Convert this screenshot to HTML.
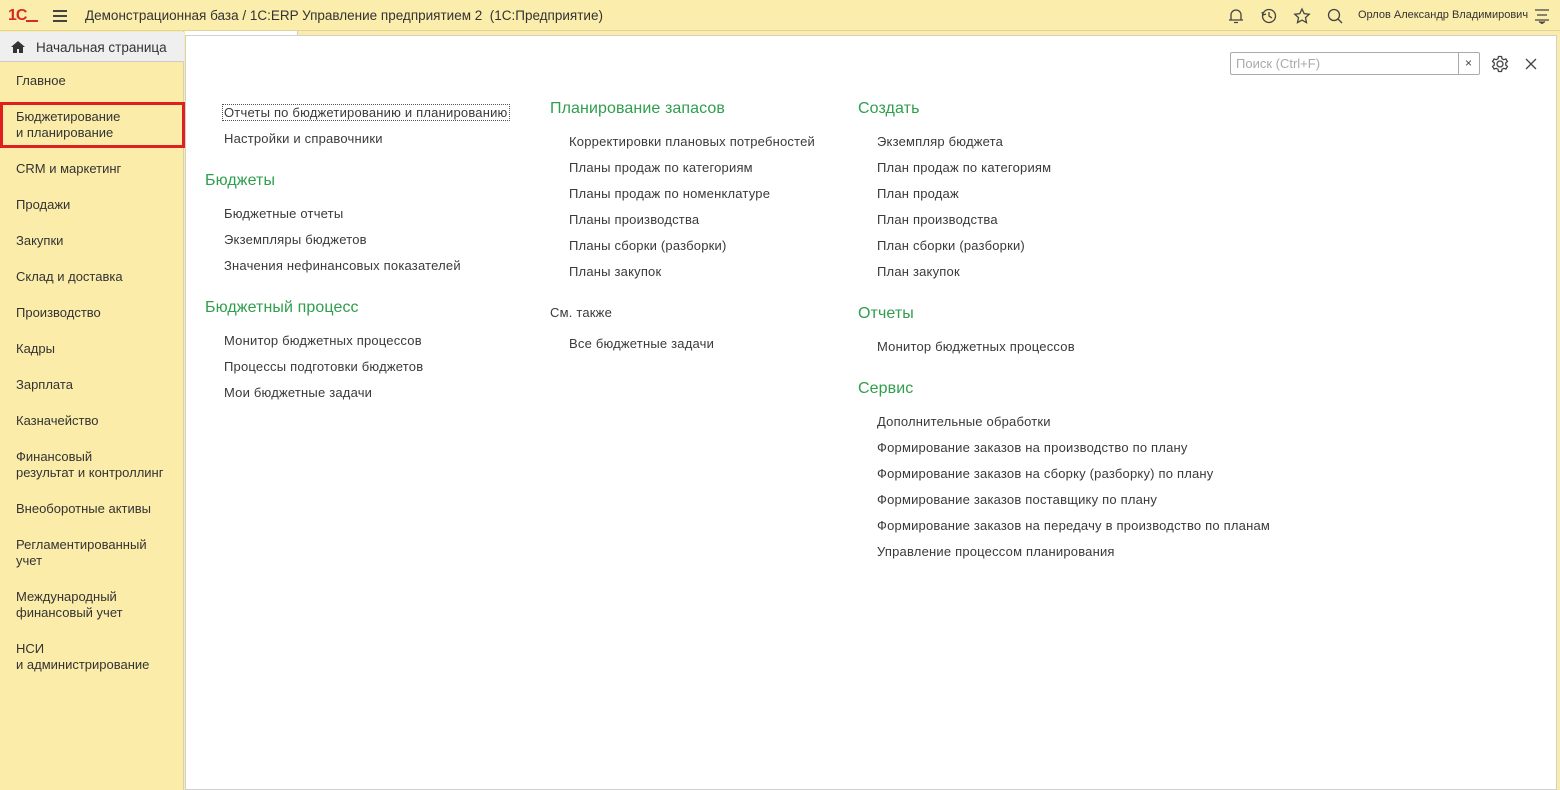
<!DOCTYPE html>
<html><head><meta charset="utf-8"><style>
*{box-sizing:border-box;margin:0;padding:0}
body{width:1560px;height:790px;overflow:hidden;background:#fbeda9;font-family:"Liberation Sans",sans-serif;font-size:13px;color:#333;position:relative}
.top{position:absolute;left:0;top:0;width:1560px;height:31px;background:#fbedab;border-bottom:1px solid #e0d49a}
.top .t{position:absolute;left:85px;top:8px;font-size:13.5px;color:#333}
.side{position:absolute;left:0;top:31px;width:184px;height:759px;background:#fbeda9;border-right:1px solid #d8d0a8}
.home{position:absolute;left:0;top:1px;width:184px;height:30px;background:#efefef;border-bottom:1px solid #ccc}
.home span{position:absolute;left:36px;top:8px;font-size:13.5px}
.si{position:absolute;left:16px;font-size:13px;line-height:16px;color:#333}
.sel{position:absolute;left:0;top:71px;width:185px;height:46px;border:3px solid #e01f1f}
.main{position:absolute;left:185px;top:35px;width:1372px;height:755px;background:#fff;border:1px solid #d0d0d0}
.l{position:absolute;font-size:13px;color:#3a3a3a;white-space:nowrap;letter-spacing:0.2px}
.h{position:absolute;font-size:16px;color:#2f9e4d;white-space:nowrap;letter-spacing:0.1px}
.srch{position:absolute;left:1230px;top:52px;width:250px;height:23px;border:1px solid #aaa;border-radius:2px;background:#fff}
.srch span{position:absolute;left:5px;top:3px;color:#aaa;font-size:13px}
.srch i{position:absolute;left:227px;top:0;width:1px;height:21px;background:#aaa}
</style></head><body>
<div class="top">
<div style="position:absolute;left:8px;top:7px;font-weight:bold;color:#d92a20;font-size:16px;letter-spacing:-1px">1<span style="font-size:16px">С</span></div>
<div style="position:absolute;left:26px;top:20px;width:12px;height:2px;background:#d92a20"></div>
<div style="position:absolute;left:53px;top:10px;width:14px;height:1.5px;background:#444;box-shadow:0 5px 0 #444,0 10px 0 #444"></div>
<div class="t">Демонстрационная база / 1С:ERP Управление предприятием 2 &nbsp;(1С:Предприятие)</div>
<svg style="position:absolute;left:1226px;top:6px" width="120" height="20" fill="none" stroke="#444" stroke-width="1.3">
<path d="M3 14h14M5 14v-5a5 5 0 0 1 10 0v5M8 16.5h4"/>
<circle cx="43" cy="10" r="6.5"/><path d="M43 6v4l3 2M36 6l1 3 3-1"/>
<path d="M76 3l2.2 4.6 5 .6-3.7 3.4 1 5-4.5-2.5-4.5 2.5 1-5-3.7-3.4 5-.6z"/>
<circle cx="108" cy="9" r="5.5"/><path d="M112 13l4 4"/>
</svg>
<div style="position:absolute;left:1358px;top:9px;font-size:11px">Орлов Александр Владимирович</div>
<svg style="position:absolute;left:1534px;top:8px" width="16" height="16" stroke="#444" stroke-width="1.3"><path d="M1 2h14M3 7h10M1 12h14"/><path d="M5 13.5l3 2 3-2" fill="#444"/></svg>
</div>
<div class="side">
<div class="home"><svg style="position:absolute;left:11px;top:9px" width="14" height="12"><path d="M7 0L0 6h2v6h4V8h2v4h4V6h2z" fill="#333"/></svg><span>Начальная страница</span></div>
<div class="si" style="top:42px">Главное</div>
<div class="sel"></div>
<div class="si" style="top:78px">Бюджетирование<br>и планирование</div>
<div class="si" style="top:130px">CRM и маркетинг</div>
<div class="si" style="top:166px">Продажи</div>
<div class="si" style="top:202px">Закупки</div>
<div class="si" style="top:238px">Склад и доставка</div>
<div class="si" style="top:274px">Производство</div>
<div class="si" style="top:310px">Кадры</div>
<div class="si" style="top:346px">Зарплата</div>
<div class="si" style="top:382px">Казначейство</div>
<div class="si" style="top:418px">Финансовый<br>результат и контроллинг</div>
<div class="si" style="top:470px">Внеоборотные активы</div>
<div class="si" style="top:506px">Регламентированный<br>учет</div>
<div class="si" style="top:558px">Международный<br>финансовый учет</div>
<div class="si" style="top:610px">НСИ<br>и администрирование</div>
</div>
<div style="position:absolute;left:185px;top:31px;width:113px;height:4px;background:#fff;border-right:1px solid #ccc"></div>
<div class="main"></div>
<div class="srch"><span>Поиск (Ctrl+F)</span><i></i><b style="position:absolute;left:234px;top:3px;font-weight:normal;font-size:12px;color:#444">×</b></div>
<svg style="position:absolute;left:1491px;top:55px" width="18" height="18" fill="none" stroke="#444" stroke-width="1.3"><circle cx="9" cy="9" r="3"/><path d="M7.5 1.5h3l.5 2.2 1.8 1 2.1-.8 1.5 2.6-1.7 1.5v2l1.7 1.5-1.5 2.6-2.1-.8-1.8 1-.5 2.2h-3l-.5-2.2-1.8-1-2.1.8-1.5-2.6 1.7-1.5v-2L1.6 6.5l1.5-2.6 2.1.8 1.8-1z"/></svg>
<svg style="position:absolute;left:1525px;top:58px" width="12" height="12" stroke="#444" stroke-width="1.3"><path d="M1 1l10 10M11 1L1 11"/></svg>

<div class="l" style="left:222px;top:104px;border:1px dotted #555;padding:0 1px">Отчеты по бюджетированию и планированию</div>
<div class="l" style="left:224px;top:131px">Настройки и справочники</div>
<div class="h" style="left:205px;top:172px">Бюджеты</div>
<div class="l" style="left:224px;top:206px">Бюджетные отчеты</div>
<div class="l" style="left:224px;top:232px">Экземпляры бюджетов</div>
<div class="l" style="left:224px;top:258px">Значения нефинансовых показателей</div>
<div class="h" style="left:205px;top:299px">Бюджетный процесс</div>
<div class="l" style="left:224px;top:333px">Монитор бюджетных процессов</div>
<div class="l" style="left:224px;top:359px">Процессы подготовки бюджетов</div>
<div class="l" style="left:224px;top:385px">Мои бюджетные задачи</div>

<div class="h" style="left:550px;top:100px">Планирование запасов</div>
<div class="l" style="left:569px;top:134px">Корректировки плановых потребностей</div>
<div class="l" style="left:569px;top:160px">Планы продаж по категориям</div>
<div class="l" style="left:569px;top:186px">Планы продаж по номенклатуре</div>
<div class="l" style="left:569px;top:212px">Планы производства</div>
<div class="l" style="left:569px;top:238px">Планы сборки (разборки)</div>
<div class="l" style="left:569px;top:264px">Планы закупок</div>
<div class="l" style="left:550px;top:305px">См. также</div>
<div class="l" style="left:569px;top:336px">Все бюджетные задачи</div>

<div class="h" style="left:858px;top:100px">Создать</div>
<div class="l" style="left:877px;top:134px">Экземпляр бюджета</div>
<div class="l" style="left:877px;top:160px">План продаж по категориям</div>
<div class="l" style="left:877px;top:186px">План продаж</div>
<div class="l" style="left:877px;top:212px">План производства</div>
<div class="l" style="left:877px;top:238px">План сборки (разборки)</div>
<div class="l" style="left:877px;top:264px">План закупок</div>
<div class="h" style="left:858px;top:305px">Отчеты</div>
<div class="l" style="left:877px;top:339px">Монитор бюджетных процессов</div>
<div class="h" style="left:858px;top:380px">Сервис</div>
<div class="l" style="left:877px;top:414px">Дополнительные обработки</div>
<div class="l" style="left:877px;top:440px">Формирование заказов на производство по плану</div>
<div class="l" style="left:877px;top:466px">Формирование заказов на сборку (разборку) по плану</div>
<div class="l" style="left:877px;top:492px">Формирование заказов поставщику по плану</div>
<div class="l" style="left:877px;top:518px">Формирование заказов на передачу в производство по планам</div>
<div class="l" style="left:877px;top:544px">Управление процессом планирования</div>
</body></html>
